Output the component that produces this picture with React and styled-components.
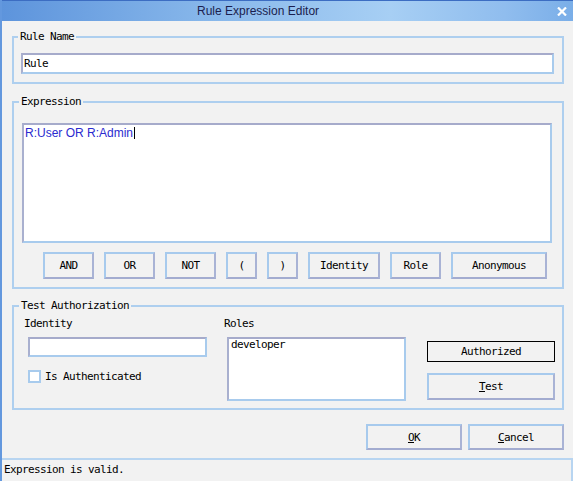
import React from 'react';
import styled, { createGlobalStyle } from 'styled-components';

const GlobalStyle = createGlobalStyle`
  * { box-sizing: border-box; }
  body { margin: 0; background: #ffffff; }
`;

const Window = styled.div`
  width: 573px;
  height: 481px;
  overflow: hidden;
  display: flex;
  flex-direction: column;
  background: #f2f2f2;
  border-left: 2px solid #6398de;
  font-family: "DejaVu Sans Mono", "Liberation Mono", monospace;
  font-size: 11px;
  letter-spacing: -0.62px;
  color: #000;
`;

const TitleBar = styled.div`
  height: 21px;
  flex-shrink: 0;
  display: flex;
  align-items: center;
  padding-left: 195px;
  padding-right: 5px;
  border-top: 1px solid #3c6dc2;
  background: linear-gradient(to right, #5d94dc 0%, #86b6ea 35%, #a7cff4 68%, #90bdee 88%, #7aaee8 100%);
`;

const Title = styled.span`
  font-family: "Liberation Sans", Arial, sans-serif;
  font-size: 12px;
  letter-spacing: 0;
  color: #1b1e4e;
`;

const CloseBtn = styled.span`
  margin-left: auto;
  display: flex;
  width: 12px;
  height: 12px;
  align-items: center;
  justify-content: center;
`;

const Body = styled.div`
  display: flex;
  flex-direction: column;
  padding: 0 9px 0 10px;
`;

const Group = styled.fieldset`
  margin: ${p => p.$top}px 0 0 0;
  min-width: 0;
  border: 2px solid #aecfef;
  padding: ${p => p.$pad};
`;

const Legend = styled.legend`
  padding: 0 2px;
  margin-left: ${p => p.$shift}px;
  line-height: 12px;
`;

const TextBox = styled.input`
  display: block;
  width: ${p => p.$w};
  height: ${p => p.$h}px;
  margin: ${p => p.$m || 0};
  padding: 0 1px;
  font: inherit;
  letter-spacing: inherit;
  color: #000;
  background: #fff;
  border: 2px solid #a8cbed;
  border-top-color: #a6abcb;
  border-left-color: #a9b0cf;
  outline: none;
`;

const ExprArea = styled.div`
  height: 120px;
  background: #fff;
  border: 2px solid #a8cbed;
  border-top-color: #a6abcb;
  border-left-color: #a9b0cf;
  padding: 1px 1px;
  font-family: "Liberation Sans", Arial, sans-serif;
  font-size: 12px;
  letter-spacing: 0;
  line-height: 14px;
  color: #2b2bcf;
`;

const Caret = styled.span`
  display: inline-block;
  width: 1px;
  height: 12px;
  margin-left: 1px;
  vertical-align: -2px;
  background: #000;
`;

const ButtonRow = styled.div`
  display: flex;
  gap: 10px;
  margin: 9px 0 0 21px;
`;

const Button = styled.button`
  width: ${p => p.$w}px;
  height: ${p => p.$h || 27}px;
  padding: 0;
  font: inherit;
  letter-spacing: inherit;
  color: #000;
  background: #f2f2f2;
  border: 2px solid #a7caed;
  border-right-color: #a9b3d5;
  border-bottom-color: #a3acd0;
  cursor: default;
`;

const Under = styled.span`
  text-decoration: underline;
`;

const AuthRow = styled.div`
  display: flex;
  align-items: flex-start;
`;

const Column = styled.div`
  width: ${p => p.$w}px;
  margin: ${p => p.$m || 0};
  display: flex;
  flex-direction: column;
`;

const Label = styled.div`
  line-height: 12px;
`;

const CheckRow = styled.label`
  display: flex;
  align-items: center;
  gap: 4px;
  margin: 13px 0 0 4px;
  line-height: 12px;
`;

const CheckBox = styled.span`
  width: 13px;
  height: 13px;
  background: #fff;
  border: 2px solid #a8cbed;
`;

const ListBox = styled.div`
  width: 179px;
  height: 64px;
  margin: 7px 0 0 3px;
  padding: 0 2px;
  line-height: 12px;
  background: #fff;
  border: 2px solid #a8cbed;
  border-top-color: #a6abcb;
  border-left-color: #a9b0cf;
`;

const Status = styled.div`
  height: 21px;
  display: flex;
  align-items: center;
  justify-content: center;
  border: 1px solid #000;
  background: #f2f2f2;
  margin-bottom: 11px;
`;

const Footer = styled.div`
  display: flex;
  justify-content: flex-end;
  gap: 6px;
  margin-top: 14px;
`;

const StatusBar = styled.div`
  margin-top: 8px;
  flex: 1;
  padding: 4px 0 0 2px;
  line-height: 12px;
  border-top: 2px solid #b8d5f1;
  border-right: 2px solid #b8d5f1;
`;

const ops = [
  { label: 'AND', w: 51 },
  { label: 'OR', w: 51 },
  { label: 'NOT', w: 51 },
  { label: '(', w: 31 },
  { label: ')', w: 31 },
  { label: 'Identity', w: 72 },
  { label: 'Role', w: 51 },
  { label: 'Anonymous', w: 96 },
];

export default function App() {
  return (
    <>
      <GlobalStyle />
      <Window>
        <TitleBar>
          <Title>Rule Expression Editor</Title>
          <CloseBtn>
            <svg width="10" height="9" viewBox="0 0 10 9">
              <path d="M1 0.5 L9 8.5 M9 0.5 L1 8.5" stroke="#fff" strokeWidth="2.2" />
            </svg>
          </CloseBtn>
        </TitleBar>
        <Body>
          <Group $top={10} $pad="10px 8px 8px 7px">
            <Legend $shift={-3}>Rule Name</Legend>
            <TextBox $w="100%" $h={21} readOnly defaultValue="Rule" />
          </Group>

          <Group $top={12} $pad="15px 10px 8px 8px">
            <Legend $shift={-3}>Expression</Legend>
            <ExprArea>
              R:User OR R:Admin<Caret />
            </ExprArea>
            <ButtonRow>
              {ops.map(op => (
                <Button key={op.label} $w={op.w}>{op.label}</Button>
              ))}
            </ButtonRow>
          </Group>

          <Group $top={11} $pad="6px 7px 7px 10px">
            <Legend $shift={-5}>Test Authorization</Legend>
            <AuthRow>
              <Column $w={200}>
                <Label>Identity</Label>
                <TextBox $w="179px" $h={20} $m="7px 0 0 4px" readOnly defaultValue="" />
                <CheckRow>
                  <CheckBox />
                  Is Authenticated
                </CheckRow>
              </Column>
              <Column $w={182}>
                <Label>Roles</Label>
                <ListBox>developer</ListBox>
              </Column>
              <Column $w={128} $m="23px 0 0 21px">
                <Status>Authorized</Status>
                <Button $w={128}><Under>T</Under>est</Button>
              </Column>
            </AuthRow>
          </Group>

          <Footer>
            <Button $w={96} $h={26}><Under>O</Under>K</Button>
            <Button $w={96} $h={26}><Under>C</Under>ancel</Button>
          </Footer>
        </Body>
        <StatusBar>Expression is valid.</StatusBar>
      </Window>
    </>
  );
}
